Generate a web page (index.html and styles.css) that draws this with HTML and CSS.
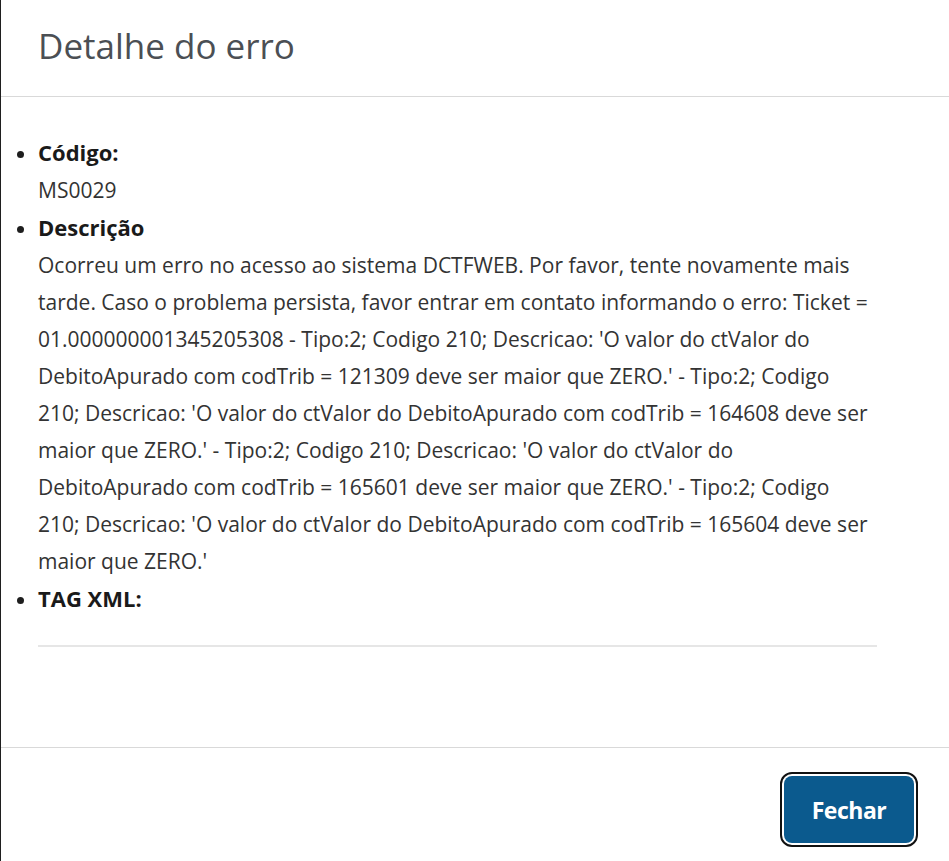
FILE: index.html
```html
<!DOCTYPE html>
<html lang="pt-BR">
<head>
    <meta charset="UTF-8">
    <meta name="viewport" content="width=device-width, initial-scale=1.0">
    <title>Detalhe do erro</title>
    <link rel="stylesheet" href="styles.css">
</head>
<body>
    <div class="modal">
        <div class="modal-header">
            <h2>Detalhe do erro</h2>
        </div>
        <div class="modal-body">
            <ul class="detail-list">
                <li>
                    <strong>Código:</strong>
                    <p>MS0029</p>
                </li>
                <li>
                    <strong>Descrição</strong>
                    <p>Ocorreu um erro no acesso ao sistema DCTFWEB. Por favor, tente novamente mais tarde. Caso o problema persista, favor entrar em contato informando o erro: Ticket = 01.000000001345205308 - Tipo:2; Codigo 210; Descricao: 'O valor do ctValor do DebitoApurado com codTrib = 121309 deve ser maior que ZERO.' - Tipo:2; Codigo 210; Descricao: 'O valor do ctValor do DebitoApurado com codTrib = 164608 deve ser maior que ZERO.' - Tipo:2; Codigo 210; Descricao: 'O valor do ctValor do DebitoApurado com codTrib = 165601 deve ser maior que ZERO.' - Tipo:2; Codigo 210; Descricao: 'O valor do ctValor do DebitoApurado com codTrib = 165604 deve ser maior que ZERO.'</p>
                </li>
                <li>
                    <strong>TAG XML:</strong>
                    <div class="xml-box"></div>
                </li>
            </ul>
        </div>
        <div class="modal-footer">
            <button class="btn-primary" type="button">Fechar</button>
        </div>
    </div>
</body>
</html>
```

FILE: styles.css
```css
body {
    font-family: "Open Sans", Lato, sans-serif;
    background-color: #ffffff;
    margin: 0;
}
.modal {
    min-height: 861px;
    border-left: 1px solid #1f1f1f;
    box-sizing: border-box;
}
.modal-header {
    height: 96px;
    border-bottom: 1px solid #d9d9d9;
    padding: 0 37px;
    display: flex;
    align-items: center;
}
.modal-header h2 {
    margin: 0 0 6px;
    font-size: 35px;
    font-weight: 400;
    color: #4b4f54;
}
.modal-body {
    height: 651px;
    padding: 37px 72px 0 37px;
    box-sizing: border-box;
    border-bottom: 1px solid #d9d9d9;
}
.detail-list {
    margin: 0;
    padding: 0;
    list-style: disc;
    font-size: 21px;
    line-height: 37px;
    color: #1e1e1e;
}
.detail-list strong {
    font-weight: 700;
    font-size: 22px;
    color: #1a1a1a;
}
.detail-list p {
    margin: 0;
    padding-right: 6px;
    color: #333333;
}
.xml-box {
    height: 27px;
    border-bottom: 2px solid #e6e6e6;
}
.modal-footer {
    display: flex;
    justify-content: flex-end;
    padding: 24px 31px 0 0;
}
.btn-primary {
    width: 130px;
    height: 67px;
    background: #0b5a8e;
    color: white;
    font-family: "Open Sans", sans-serif;
    font-weight: 700;
    font-size: 23px;
    letter-spacing: -0.5px;
    border: none;
    border-radius: 8px;
    outline: 2px solid #111111;
    outline-offset: 2px;
    margin: 4px;
    cursor: pointer;
}
```
